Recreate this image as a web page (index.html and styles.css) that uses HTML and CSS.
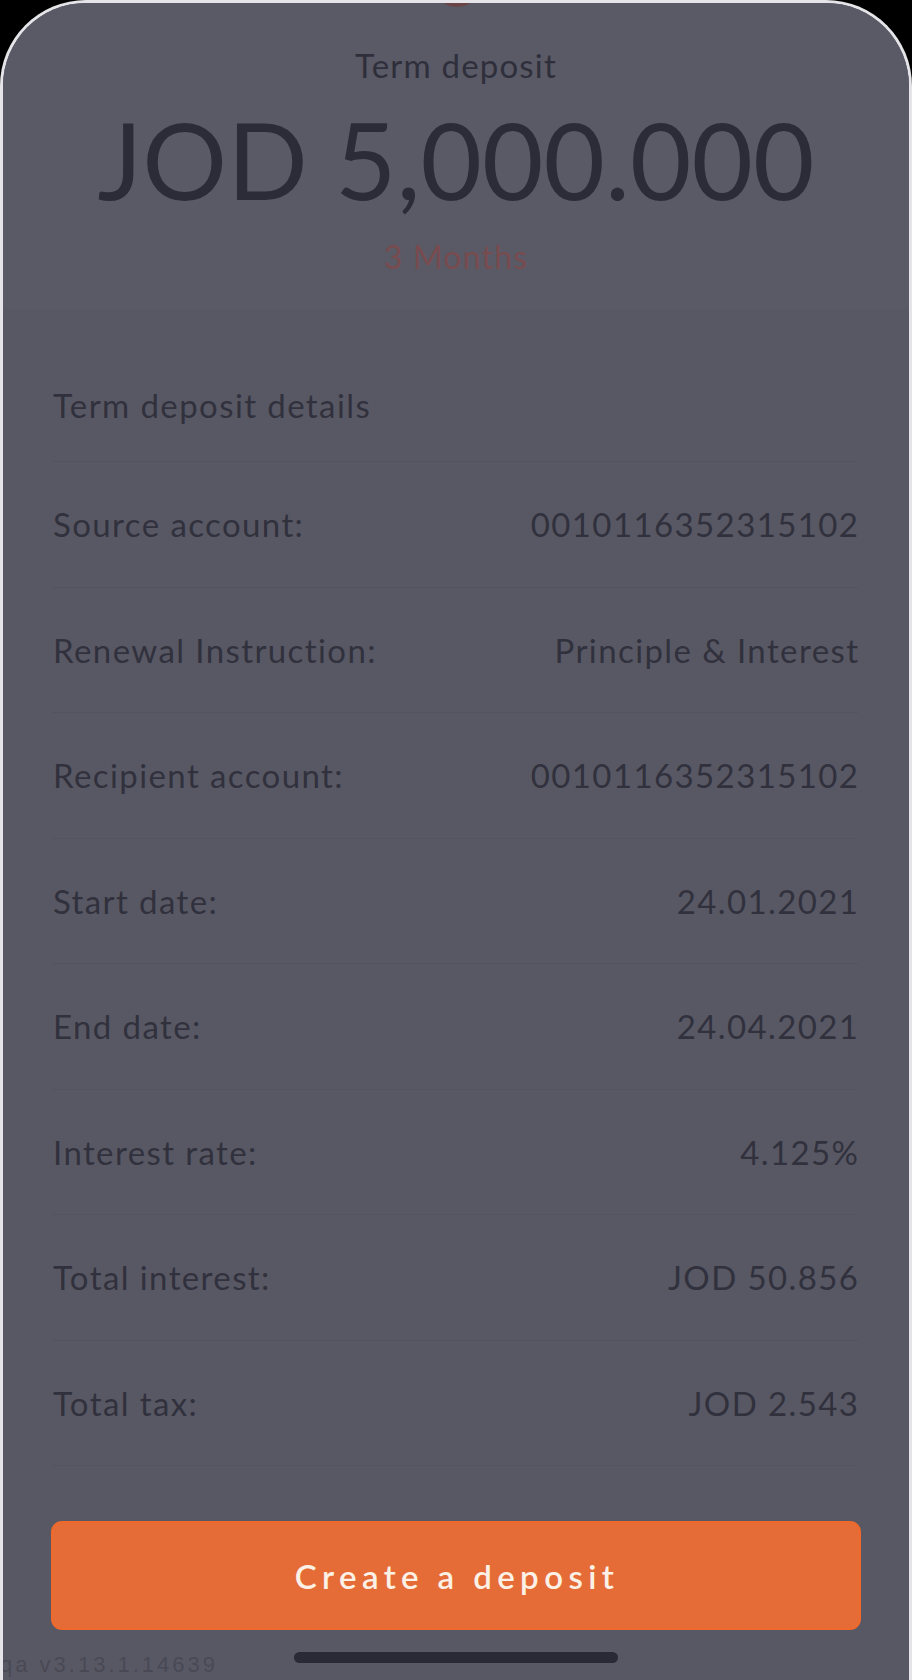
FILE: index.html
```html
<!DOCTYPE html>
<html lang="en">
<head>
    <meta charset="UTF-8">
    <meta name="viewport" content="width=device-width, initial-scale=1.0">
    <title>Term deposit</title>
    <link rel="stylesheet" href="styles.css">
</head>
<body>
    <div class="sheet">
        <span class="top-dot"></span> <!-- icon peeking from behind the sheet -->
        <div class="summary">
            <p class="summary-title">Term deposit</p>
            <p class="summary-amount">JOD 5,000.000</p>
            <p class="summary-term">3 Months</p>
        </div>
        <div class="details">
            <div class="details-title">Term deposit details</div>
            <div class="row"><span>Source account:</span><span>0010116352315102</span></div>
            <div class="row"><span>Renewal Instruction:</span><span>Principle &amp; Interest</span></div>
            <div class="row"><span>Recipient account:</span><span>0010116352315102</span></div>
            <div class="row"><span>Start date:</span><span>24.01.2021</span></div>
            <div class="row"><span>End date:</span><span>24.04.2021</span></div>
            <div class="row"><span>Interest rate:</span><span>4.125%</span></div>
            <div class="row"><span>Total interest:</span><span>JOD 50.856</span></div>
            <div class="row"><span>Total tax:</span><span>JOD 2.543</span></div>
        </div>
        <div class="actions">
            <button class="btn-create">Create a deposit</button>
        </div>
        <span class="version">qa v3.13.1.14639</span>
        <span class="home-bar"></span>
    </div>
</body>
</html>
```

FILE: styles.css
```css
html, body {
    margin: 0;
    padding: 0;
}
body {
    background-color: #000;
    width: 912px;
    height: 1680px;
    overflow: hidden;
    font-family: "Lato", "Noto Sans", sans-serif;
}
.sheet {
    position: relative;
    box-sizing: border-box;
    height: 1680px;
    border: 3px solid #e4e4e9;
    border-bottom: none;
    border-radius: 86px 86px 0 0;
    background-color: #585864;
    display: flex;
    flex-direction: column;
    overflow: hidden;
}
.top-dot {
    position: absolute;
    top: -44px;
    left: 430px;
    width: 48px;
    height: 48px;
    border-radius: 50%;
    background-color: #6a4548;
}
/* Header */
.summary {
    text-align: center;
    color: #2f2f3b;
    height: 306px;
    background-color: #5a5a66;
}
.summary p {
    margin: 0;
}
.summary-title {
    padding-top: 42px;
    font-size: 33px;
    letter-spacing: 1.2px;
    line-height: 40px;
}
.summary-amount {
    padding-top: 14px;
    font-size: 106px;
    line-height: 120px;
    color: #2c2c38;
}
.summary-term {
    padding-top: 20px;
    font-size: 32px;
    letter-spacing: 1.2px;
    line-height: 36px;
    color: #784b4f;
}
/* Details list */
.details {
    padding: 0 51px 0 50px;
    color: #31313d;
    font-size: 33px;
    letter-spacing: 1.4px;
}
.details-title {
    height: 153px;
    box-sizing: border-box;
    padding-top: 76px;
    line-height: 40px;
    border-bottom: 1px solid #53535f;
}
.row {
    display: flex;
    justify-content: space-between;
    align-items: center;
    height: 125.5px;
    box-sizing: border-box;
    border-bottom: 1px solid #53535f;
}
.row span:last-child {
    margin-right: -1.4px;
}
/* Button */
.actions {
    padding: 55px 48px 0 48px;
}
.btn-create {
    width: 100%;
    height: 109px;
    border: 2px solid #ef692c;
    border-radius: 11px;
    background-color: #e56c36;
    color: #fcf1e6;
    font-family: "Lato", sans-serif;
    font-size: 33px;
    font-weight: 600;
    letter-spacing: 5.4px;
    padding-left: 8px;
}
.version {
    position: absolute;
    left: -3px;
    bottom: 4px;
    font-family: "Liberation Sans", Arial, sans-serif;
    font-size: 22px;
    line-height: 22px;
    letter-spacing: 3px;
    color: #494955;
}
.home-bar {
    position: absolute;
    left: 291px;
    bottom: 17px;
    width: 324px;
    height: 11px;
    border-radius: 6px;
    background-color: #2a2a36;
}
```
